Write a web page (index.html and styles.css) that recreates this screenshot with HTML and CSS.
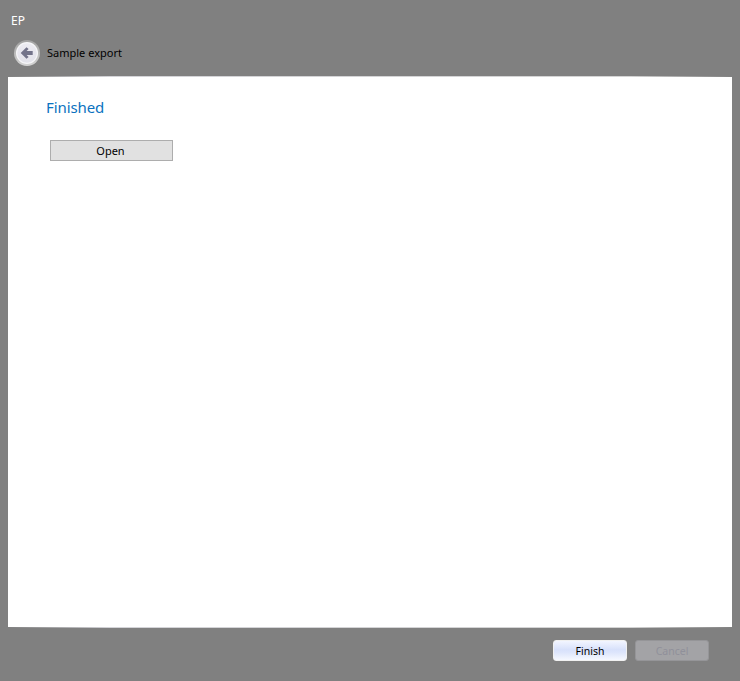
FILE: index.html
```html
<!DOCTYPE html>
<html lang="en">
<head>
<meta charset="utf-8">
<title>EP</title>
<link rel="stylesheet" href="styles.css">
</head>
<body>
<div class="window">
  <div class="title">EP</div>
  <div class="nav">
    <svg class="back" width="26" height="26" viewBox="0 0 26 26" aria-hidden="true">
      <defs>
        <linearGradient id="disc" x1="0" y1="0" x2="0" y2="1">
          <stop offset="0" stop-color="#ecebf2"/>
          <stop offset="1" stop-color="#e2e2ea"/>
        </linearGradient>
        <linearGradient id="rim" x1="0" y1="0" x2="0" y2="1">
          <stop offset="0" stop-color="#a0a0a0"/>
          <stop offset="1" stop-color="#d4d4d4"/>
        </linearGradient>
      </defs>
      <circle cx="13" cy="13" r="13" fill="url(#rim)"/>
      <circle cx="13" cy="13" r="11" fill="#f6f6f8"/>
      <circle cx="13" cy="13" r="9.8" fill="url(#disc)"/>
      <path d="M6.7 13 L12.5 7.3 L14.6 9 L12.6 11 L18.7 11 L18.7 15 L12.6 15 L14.6 17 L12.5 18.7 Z" fill="#73738a"/>
    </svg>
    <span class="nav-label">Sample export</span>
  </div>
  <div class="rule"></div>
  <main class="panel">
    <h1 class="heading">Finished</h1>
    <button class="open" type="button">Open</button>
  </main>
  <div class="rule"></div>
  <div class="footer">
    <button class="action finish" type="button">Finish</button>
    <button class="action cancel" type="button" disabled>Cancel</button>
  </div>
</div>
</body>
</html>
```
FILE: styles.css
```css
* { box-sizing: border-box; }
html, body { margin: 0; height: 100%; overflow: hidden; }
body { background: #808080; font-family: "Noto Sans", "Open Sans", sans-serif; }
.window { height: 681px; display: flex; flex-direction: column; }
.title { height: 36px; padding: 12px 0 0 11px; font-size: 12px; line-height: 17px; color: #fff; }
.nav { height: 40px; display: flex; align-items: center; gap: 7px; padding: 0 0 6px 14px; }
.back { display: block; flex: none; }
.nav-label { margin-bottom: 2px; font-size: 11px; color: #000; }
.rule { height: 1px; margin: 0 8px; background: linear-gradient(90deg, #808080, #d4d4d8 14%, #d4d4d4 86%, #808080); }
.panel { height: 550px; margin: 0 8px; background: #fff; padding: 19px 0 0 38px; }
.heading { margin: 0 0 22px; font-size: 15px; line-height: 22px; font-weight: 400; color: #0a72c0; letter-spacing: -0.1px; }
.open { display: block; width: 123px; height: 21px; margin-left: 4px; padding: 0 2px 0 0; background: #e1e1e1; border: 1px solid #adadad; font: 11px "Noto Sans", sans-serif; color: #000; }
.footer { flex: 1; display: flex; justify-content: flex-end; gap: 8px; padding: 12px 31px 0 0; }
.action { width: 74px; height: 21px; padding: 0; border-radius: 3px; font: 10.5px "Noto Sans", sans-serif; }
.finish { color: #000; border: 1px solid #f0f0f0; background: linear-gradient(180deg, #f2f5ff 0%, #d8e1fb 45%, #dde5fc 60%, #f6f8ff 100%); }
.cancel { color: #90909a; border: 1px solid #959598; background: #a3a3a6; }
```
